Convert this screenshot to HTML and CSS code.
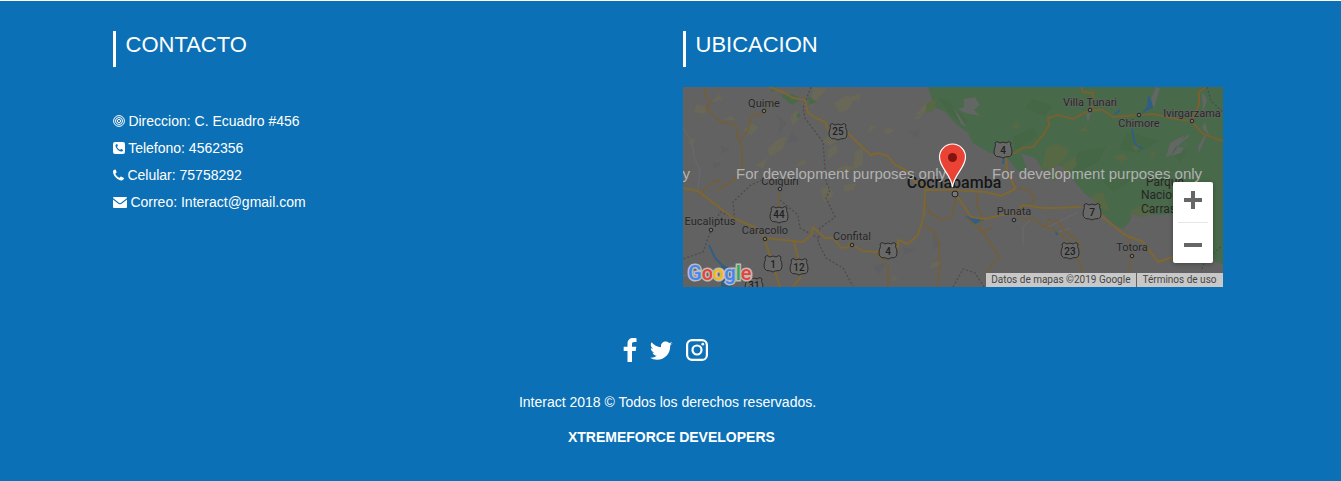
FILE: index.html
```html
<!DOCTYPE html>
<html lang="es">
<head>
<meta charset="utf-8">
<meta name="viewport" content="width=device-width, initial-scale=1">
<title>Interact</title>
<link rel="stylesheet" href="styles.css">
</head>
<body>
<footer class="footer">
  <div class="columns">
    <section class="column">
      <h2 class="heading">CONTACTO</h2>
      <ul class="contact">
        <li><svg class="icon" width="12" height="12" viewBox="0 0 12 12" aria-hidden="true"><g fill="none" stroke="#fff"><circle cx="6" cy="6" r="5.4"/><circle cx="6" cy="6" r="3.5"/><circle cx="6" cy="6" r="1.6"/></g></svg> Direccion: C. Ecuadro #456</li>
        <li><svg class="icon" width="12" height="12" viewBox="0 0 12 12" aria-hidden="true"><rect width="12" height="12" rx="2" fill="#fff"/><path d="M2.500 3.600c0-.8.8-1.600 1.500-1.600.4 0 .9 1.500.9 1.800 0 .4-.8.8-.8 1.100 0 .7 2.200 2.900 3 2.900.3 0 .7-.8 1.100-.8.3 0 1.800.7 1.800 1 0 .9-.9 1.600-1.800 1.600-2.300 0-5.700-3.500-5.700-6z" fill="#0b70b5"/></svg> Telefono: 4562356</li>
        <li><svg class="icon" width="11" height="12" viewBox="0 0 11 12" aria-hidden="true"><path d="M0 2.700C0 1.500 1.200.6 2.200.6c.6 0 1.400 2.300 1.400 2.700 0 .6-1.200 1-1.200 1.500 0 1 3 4 4 4 .5 0 .9-1.200 1.500-1.200.4 0 3.100 1.200 3.100 1.600 0 1.200-1.300 2.200-2.600 2.200C4.800 11.400 0 6.400 0 2.700z" fill="#fff"/></svg> Celular: 75758292</li>
        <li><svg class="icon" width="14" height="12" viewBox="0 0 14 12" aria-hidden="true"><path d="M0 2Q0 1 1 1h12q1 0 1 1L8.400 6.500Q7 7.600 5.600 6.500zM0 3.600l5 4q2 1.500 4 0l5-4V11q0 1-1 1H1q-1 0-1-1z" fill="#fff"/></svg> Correo: Interact@gmail.com</li>
      </ul>
    </section>
    <section class="column">
      <h2 class="heading">UBICACION</h2>
      <div class="map">
        <svg class="map-canvas" viewBox="0 0 540 200" preserveAspectRatio="xMidYMid slice" role="img" aria-label="Mapa de Cochabamba">
          <defs>
            <path id="shield" d="M-8-7L-6-8.500-3-7 0-8 3-7 6-8.500 8-7 7.500-4.500Q9-2 9 2T6.500 6.500Q2 6.500 0 8-2 6.500-6.500 6.500-9 5-9 2T-7.500-4.500z"/>
          </defs>
          <rect width="540" height="200" fill="#626262"/>
          <g fill="#686758">
            <path d="M130 0l14 2-8 9-9 11 2-14zM151 16l12-8 8 4-5 10-10 4zM60 43l10-7 6 4-8 8zM84 62l11-10 9-3-4 13-13 8zM107 30l7-8 2 10-6 7zM172 65l8-5v18l-10 5zM145 63l8-6 2 8-10 7zM13 17l12 3-4 7-10-2zM28 15l8-8 4 6zM204 40l8 3-7 5-4-3zM230 31l11-5-6 7zM245 14l6 3-11 9-9 3zM139 53l15-8 4 6-11 8zM162 12l15-6v8zM187 38l6 2-8 6zM137 102l9-4 5 10-10 8zM160 98l13-2-2 7-9 2zM249 176l10-3-4 6-8 3zM530 151l3 2-2 4zM209 189l6 2-4 4zM40 33l8-5 5 5zM73 78l12-8-5 12zM111 80l9-8 4 5zM152 83l11-5 8 2-7 7zM5 55l9-5-5 9z"/>
          </g>
          <path d="M92 27l12 9-9 12 2-13zM38 59l10 3-10 5zM109 45l8 8-12 3zM225 45l12-3-2 9zM30 75l9 2-9 5zM190 180l14-5-8 12zM220 160l13 3-12 4zM250 145l8 12-8 6z" fill="#5e5f60"/>
          <path d="M245 0l4 12 2 8 10 4 12 13 12 9 5 10 17 10 17 5 12 14 8-3-6-16 14 5 10 14 8-8 14 4 8 14 10 12 9 6 9 14 12 11 8 4 7-8 2-11 10-1 10 6 25-1 12 18 20 12 6 18 18 5V0z" fill="#48694a"/>
          <path d="M255 10l10 4 20 20-7 3-13-12zM330 50l20-9 5 8-23 14zM395 65l28-5-8 15-25 12zM445 45l30 9-20 12-19-4zM485 60l20 4-9 11zM420 94l14-6 15 5-19 12zM350 12l20 7-9 10-19-8z" fill="#466746"/>
          <path d="M363 62l10-6 14 7-6 10-9 8-14 2zM379 78l13-9 2 9-10 10zM365 88l11-6-4 13zM448 60l9-4-3 9zM430 70l10-4 6 6-9 3zM466 68l6-5v8zM445 126l15-9 22 3-22 10zM408 109l12-4 7 20-12-5zM243 16l11-4-3 11-8 4zM327 42l8-8 2 7zM395 44l8-5 2 6z" fill="#566844"/>
          <path d="M281 12l11-2 5 8-6 5 6 6-15-3-7-4 6-2zM270 20l6 8 7 12-5-3zM502 48l-15 8-4 14 5-2 5-9 8 2 6-14-8 5zM497 57l8-7-2 8-5 8-10 3zM403 27l5-2-3 11zM515 60l8-14-1 6-6 14zM473 0l4 1-6 20-4-7zM519 5l5 7-4 14zM522 35l4 14-7-8z" fill="#626764"/>
          <path d="M97 8l12-1 10 5-10 6zM86 0l8 3-5 2zM125 9l9 6-8 3zM113 28l4-2-1 6z" fill="#48694a"/>
          <g fill="none" stroke="#4b4c4e" stroke-width="1.300" stroke-dasharray="2 2">
            <path d="M128 0l-8 21 2 10 18 24 3 40 4 8-4 8 9 19-15 11-2 14 8 16 17 10 10 18M79 93l-11 5-18 17 2 20M50 130l-13-5-12 26-5 14-20 7M97 113l18 15 2 13 18 10M270 200l10-18 12 4 9 14M524 0l4 14 12 11M538 160l-15 12-5 12"/>
          </g>
          <path d="M0 41l9 13 2 15 6 16-2 17M350 130l-10 10v18M360 143l35-18M373 146l15-5M0 189l40-9 22-2" fill="none" stroke="#696a6b"/>
          <g fill="none" stroke="#315f83" stroke-width="2">
            <path d="M26 158l6 13 10 10 3 19M449 42l3 15 8 5M432 27l5-4M466 9l-1 11-5 6"/>
            <path d="M283 130l16 3-7 3zM320 77l1-8M467 12l2 8-6 3M365 133h2M373 144l1 4" fill="#315f83"/>
          </g>
          <path d="M38 178l8 2 3 20H38z" fill="#365e7b"/>
          <g fill="none" stroke="#745f36" stroke-width="1.500" stroke-linejoin="round">
            <path d="M21 0l2 10 5 5-5 7 5 3 9 10 16 3 1 12 5 10v20L47 97l-15 6M92 11L80 25l-12 5-3 13-8 10M15 109l14-14 10-2M97 105l-2 15M241 139l11 6 4 13 1 23-3 19M283 130l17 15 17 26-12 10-2 14M294 106v11l4 11-1 17 12-4M242 115l5 11 11 7 11-3 4-19M193 166l12 12v22M332 102V96M362 142l3-9 10 1 6 10 11 7 7 11M443 148l5 17-2 22M383 162l10 5 5 13 5 17M332 101l14 2 6 9-4 5M332 126l10 7 8-2 10 8 12 4 15 12"/>
          </g>
          <g fill="none" stroke="#7e6730" stroke-width="2" stroke-linejoin="round">
            <path d="M86 0l14 5 10 6 12 2 3 13 8 5 9 4 3 8 20 3 15 15 8 7 7-2 10 3 7 9 11 5 9 12 15 6M0 101l15 3 35 27 22 9 10 11 38 4 8-7 2-8 12 11h8l8 10 7-1 2-4 13 8 13 1 22-4v-8l10 4 10-9 6-20 1-25h31l30 2 15 4 14-7M323 70l1 15 9 17M273 107l15 23 14 2 16-4 14-2 8-8 20 3h10l28-1M417 128l25 20 18 7 15 20 15-5M82 153l15 47M111 155l6 23v13l-7 9"/>
          </g>
          <path d="M330 67l10-6 10-1 10-12 6-10-1-7 10-3 15 4 17-9h13l10 7 40-3 23 5 15 2 12 13 20 7M398 0l2 5 10 1 1 12-4 5M523 0l-7 5v13l-7 15" fill="none" stroke="#78602f" stroke-width="2"/>
          <g class="shield-marks">
            <use href="#shield" x="155" y="45"/><use href="#shield" x="320" y="63"/><use href="#shield" x="96" y="128"/><use href="#shield" x="90" y="177"/><use href="#shield" x="116" y="180"/><use href="#shield" x="71" y="199"/><use href="#shield" x="205" y="164"/><use href="#shield" x="409" y="125"/><use href="#shield" x="387" y="164"/>
          </g>
          <g class="route-text">
            <text x="155" y="48">25</text><text x="320" y="67">4</text><text x="96" y="131">44</text><text x="90" y="181">1</text><text x="116" y="184">12</text><text x="71" y="202">31</text><text x="205" y="168">4</text><text x="409" y="129">7</text><text x="387" y="168">23</text>
          </g>
          <g class="town-dots">
            <circle cx="81" cy="24" r="1.800"/><circle cx="97" cy="102" r="1.800"/><circle cx="28" cy="143" r="1.800"/><circle cx="82" cy="152" r="1.800"/><circle cx="169" cy="158" r="1.800"/><circle cx="331" cy="133" r="1.800"/><circle cx="407" cy="23" r="1.800"/><circle cx="456" cy="28" r="1.800"/><circle cx="509" cy="34" r="1.800"/><circle cx="449" cy="169" r="1.800"/><circle cx="272" cy="107" r="3"/>
          </g>
          <g class="town-text">
            <text x="81" y="20">Quime</text><text x="97" y="98">Colquiri</text><text x="27" y="138">Eucaliptus</text><text x="82" y="147">Caracollo</text><text x="169" y="153">Confital</text><text x="331" y="128">Punata</text><text x="407" y="19">Villa Tunari</text><text x="456" y="40">Chimore</text><text x="509" y="30">Ivirgarzama</text><text x="449" y="164">Totora</text>
            <text class="park" x="463" y="99">Parque</text><text class="park" x="458" y="112">Nacional</text><text class="park" x="458" y="126">Carrasco</text>
            <text class="city" x="271" y="101">Cochabamba</text>
          </g>
          <g class="watermark"><text x="-203" y="92">For development purposes only</text><text x="53" y="92">For development purposes only</text><text x="309" y="92">For development purposes only</text></g>
          <path d="M269.500 100C268 87 256.500 81 256.500 70a13 13 0 0 1 26 0c0 11-11.500 17-13 30z" fill="#ea4335" stroke="#fff" stroke-width="1.200"/>
          <circle cx="269.500" cy="70.500" r="4.500" fill="#811411"/>
          <text class="logo" x="5" y="193"><tspan fill="#4285f4">G</tspan><tspan fill="#ea4335">o</tspan><tspan fill="#fbbc05">o</tspan><tspan fill="#4285f4">g</tspan><tspan fill="#34a853">l</tspan><tspan fill="#ea4335">e</tspan></text>
        </svg>
        <div class="zoom">
          <button type="button" aria-label="Acercar"><svg width="18" height="18" viewBox="0 0 18 18"><path d="M7 0h4v7h7v4h-7v7H7v-7H0V7h7z" fill="#666"/></svg></button>
          <button type="button" aria-label="Alejar"><svg width="18" height="18" viewBox="0 0 18 18"><path d="M0 7h18v4H0z" fill="#666"/></svg></button>
        </div>
        <div class="credits"><span>Datos de mapas ©2019 Google</span><a href="#">Términos de uso</a></div>
      </div>
    </section>
  </div>
  <nav class="social" aria-label="Redes sociales">
    <a href="#" aria-label="Facebook"><svg width="14" height="24" viewBox="0 0 14 24"><path d="M13.500.2v3.800h-2.300C9.400 4 9 4.900 9 6.100v2.700h4.300l-.6 4.200H9v11H4.500V13H.7V8.800h3.800V5.600C4.500 1.900 6.800 0 10.200 0c1.600 0 2.900.1 3.300.2z"/></svg></a>
    <a href="#" aria-label="Twitter"><svg width="23" height="24" viewBox="0 0 23 24"><path d="M22.500 5.200a9 9 0 0 1-2.300 2.400C20.500 15 15.200 21.700 7.100 21.700c-2.600 0-5-.7-7-2a9.500 9.500 0 0 0 6.700-1.900 4.600 4.600 0 0 1-4.300-3.200c.7.100 1.400.1 2.100-.1A4.600 4.600 0 0 1 .9 9.900c.6.400 1.300.6 2.100.6A4.700 4.700 0 0 1 1.600 4.300a13 13 0 0 0 9.500 4.900C10 4.700 15.500 1.400 19 5c1-.2 2-.6 2.900-1.100a4.600 4.600 0 0 1-2 2.500c.9-.1 1.800-.3 2.600-.7z"/></svg></a>
    <a href="#" aria-label="Instagram"><svg width="22" height="24" viewBox="0 0 22 24"><g fill="none" stroke="#fff" stroke-width="2.200"><rect x="1.100" y="2.100" width="19.800" height="19.800" rx="5"/><circle cx="11" cy="12" r="4.500"/></g><circle cx="16.800" cy="6.200" r="1.400"/></svg></a>
  </nav>
  <p class="legal">Interact 2018 © Todos los derechos reservados.</p>
  <p class="legal"><strong>&nbsp;&nbsp;XTREMEFORCE DEVELOPERS</strong></p>
</footer>
</body>
</html>
```
FILE: styles.css
```css
* { box-sizing: border-box; }
body {
  margin: 0;
  background: #0b70b5;
  color: #fff;
  font: 14px/20px "Liberation Sans", Arial, sans-serif;
}
.footer {
  border-top: 1px solid #fff;
  padding: 30px 6px 34px 0;
}
.columns {
  display: grid;
  grid-template-columns: 1fr 1fr;
  gap: 30px;
  max-width: 1140px;
  margin: 0 auto;
  padding: 0 15px;
}
.heading {
  margin: 0 0 20px;
  padding: 1px 0 9px 10px;
  border-left: 3px solid #fff;
  font-size: 22px;
  font-weight: 400;
  line-height: 26px;
}
.contact {
  margin: 0;
  padding: 21px 0 0;
  list-style: none;
  line-height: 27px;
}
.icon { vertical-align: -1px; }
.map {
  position: relative;
  height: 200px;
  overflow: hidden;
  background: #626262;
  font-family: Roboto, sans-serif;
}
.map-canvas { display: block; width: 100%; height: 100%; }
.shield-marks { fill: #686868; stroke: #2c2c2c; stroke-width: 1; }
.route-text { fill: #202020; font-size: 10px; font-weight: 500; text-anchor: middle; }
.town-dots { fill: #777; stroke: #222; stroke-width: 1; }
.town-text {
  fill: #262626;
  stroke: #686868;
  stroke-width: 1;
  paint-order: stroke;
  font-size: 11px;
  text-anchor: middle;
}
.town-text .park { fill: #1d2a1d; stroke: #536553; font-size: 12px; text-anchor: start; }
.town-text .city { fill: #161616; font-size: 16px; font-weight: 500; }
.watermark { fill: #b2b2b2; font-family: "Liberation Sans", Arial, sans-serif; font-size: 15px; }
.logo { font-family: Roboto, sans-serif; font-size: 20px; font-weight: 500; stroke: #bcbcbc; stroke-width: 3; paint-order: stroke; }
.zoom {
  position: absolute;
  right: 10px;
  bottom: 24px;
  width: 40px;
  border-radius: 2px;
  background: #fff;
  box-shadow: 0 1px 4px rgba(0, 0, 0, .3);
}
.zoom button {
  display: flex;
  align-items: center;
  justify-content: center;
  width: 100%;
  height: 40px;
  padding: 0 0 4px;
  border: 0;
  background: none;
}
.zoom button + button { height: 41px; padding: 5px 0 0; }
.zoom button + button::before {
  content: "";
  position: absolute;
  top: 40px;
  left: 5px;
  right: 5px;
  height: 1px;
  background: #e6e6e6;
}
.credits {
  position: absolute;
  right: 0;
  bottom: 0;
  display: flex;
  background: #c8c8c8;
  color: #444;
  font-size: 10px;
  line-height: 14px;
}
.credits > * { padding: 0 6px 0 5px; }
.credits a { border-left: 1px solid #626262; color: inherit; text-decoration: none; }
.social {
  display: flex;
  justify-content: center;
  gap: 13px;
  margin: 51px 0 30px;
  padding-right: 5px;
}
.social a { display: flex; }
.social svg { fill: #fff; }
.legal { margin: 0 0 15px; text-align: center; }
```
